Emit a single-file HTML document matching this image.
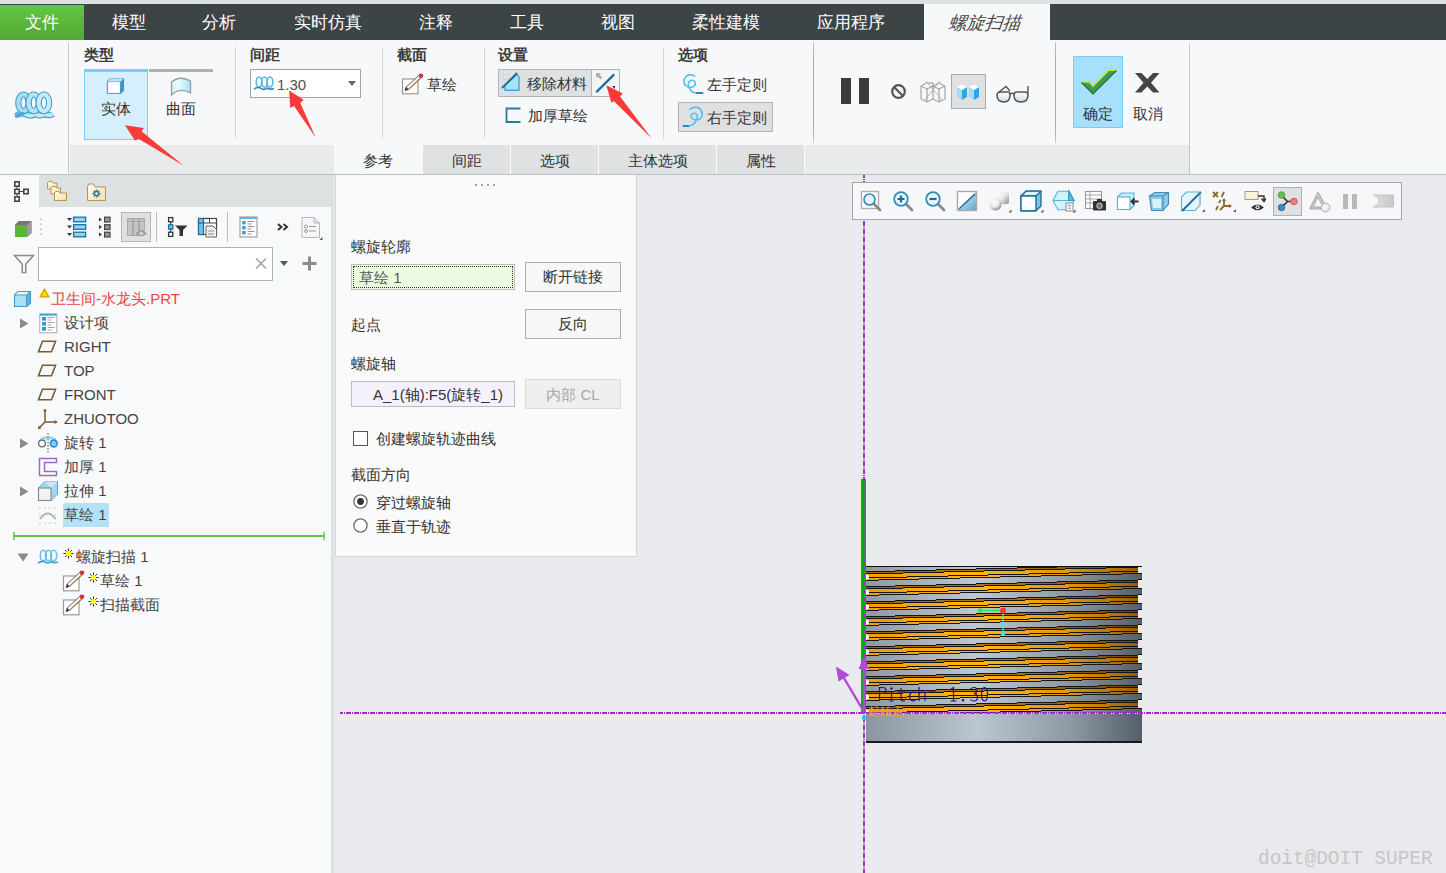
<!DOCTYPE html>
<html><head><meta charset="utf-8">
<style>
*{box-sizing:border-box;margin:0;padding:0}
html,body{width:1446px;height:873px;overflow:hidden;background:#e9eaee;font-family:"Liberation Sans",sans-serif;color:#333}
.a{position:absolute}
.t{position:absolute;white-space:nowrap;line-height:1}
#topstrip{left:0;top:0;width:1446px;height:4px;background:#dde1e1}
#menubar{left:0;top:4px;width:1446px;height:36px;background:#3d4446}
.mt{position:absolute;top:4px;height:36px;line-height:38px;font-size:17px;color:#fff;white-space:nowrap}
#ribbon{left:0;top:40px;width:1446px;height:134px;background:#f7f8fa}
.sep{position:absolute;width:1px;background:linear-gradient(#c4caca,#a4acac 15%,#a4acac 85%,#c4caca)}
.lbl{position:absolute;font-size:15px;font-weight:bold;color:#3c3c3c;white-space:nowrap;line-height:1}
.rt{position:absolute;font-size:15px;color:#333;white-space:nowrap;line-height:1}
#subbar{left:70px;top:145px;width:1119px;height:29px;background:#e8eaeb}
.st{position:absolute;top:145px;height:29px;background:#dfe1e3;font-size:15px;color:#333;text-align:center;line-height:31px}
#ribline{left:0;top:174px;width:1446px;height:1px;background:#b6c2c2}
#treehdr{left:0;top:175px;width:331px;height:32px;background:#dce1e1}
#tree{left:0;top:207px;width:331px;height:666px;background:#f8f9fa}
#sash{left:331px;top:175px;width:3px;height:698px;background:#dce1e1}
.tr{position:absolute;font-size:15px;color:#444;white-space:nowrap;line-height:1}
#panel{left:335px;top:175px;width:302px;height:382px;background:#fafafa;border:1px solid #d3d5d8;border-top:none}
.pl{position:absolute;font-size:15px;color:#333;white-space:nowrap;line-height:1}
.btn{position:absolute;background:#f7f7f7;border:1px solid #adadad;font-size:15px;color:#333;text-align:center}
.c{display:inline-block;width:1em;text-align:center}
</style></head><body>
<div class="a" id="topstrip"></div>
<div class="a" id="menubar"></div>
<div class="a" style="left:0;top:5px;width:84px;height:35px;background:linear-gradient(#63c843,#52a732)"></div>
<div class="mt" style="left:25px"><span class="c">文</span><span class="c">件</span></div>
<div class="mt" style="left:112px"><span class="c">模</span><span class="c">型</span></div>
<div class="mt" style="left:202px"><span class="c">分</span><span class="c">析</span></div>
<div class="mt" style="left:294px"><span class="c">实</span><span class="c">时</span><span class="c">仿</span><span class="c">真</span></div>
<div class="mt" style="left:419px"><span class="c">注</span><span class="c">释</span></div>
<div class="mt" style="left:510px"><span class="c">工</span><span class="c">具</span></div>
<div class="mt" style="left:601px"><span class="c">视</span><span class="c">图</span></div>
<div class="mt" style="left:692px"><span class="c">柔</span><span class="c">性</span><span class="c">建</span><span class="c">模</span></div>
<div class="mt" style="left:817px"><span class="c">应</span><span class="c">用</span><span class="c">程</span><span class="c">序</span></div>
<div class="a" style="left:924px;top:4px;width:126px;height:36px;background:#f7f8fa"></div>
<div class="mt" style="left:947px;color:#444;font-size:18px;transform:skewX(-20deg);transform-origin:0 28px"><span class="c">螺</span><span class="c">旋</span><span class="c">扫</span><span class="c">描</span></div>

<div class="a" id="ribbon"></div>
<div class="a" id="subbar"></div>
<div class="sep" style="left:68px;top:43px;height:130px;background:#c4c8c8"></div>
<div class="sep" style="left:235px;top:47px;height:92px;background:#d2d6d7"></div>
<div class="sep" style="left:382px;top:47px;height:92px;background:#d2d6d7"></div>
<div class="sep" style="left:484px;top:47px;height:92px;background:#d2d6d7"></div>
<div class="sep" style="left:663px;top:47px;height:92px;background:#d2d6d7"></div>
<div class="sep" style="left:813px;top:42px;height:101px"></div>
<div class="sep" style="left:1055px;top:42px;height:101px"></div>
<div class="sep" style="left:1189px;top:43px;height:131px;background:#c4c8c8"></div>

<div class="lbl" style="left:84px;top:47px"><span class="c">类</span><span class="c">型</span></div>
<div class="lbl" style="left:250px;top:47px"><span class="c">间</span><span class="c">距</span></div>
<div class="lbl" style="left:397px;top:47px"><span class="c">截</span><span class="c">面</span></div>
<div class="lbl" style="left:498px;top:47px"><span class="c">设</span><span class="c">置</span></div>
<div class="lbl" style="left:678px;top:47px"><span class="c">选</span><span class="c">项</span></div>

<!-- type buttons -->
<div class="a" style="left:84px;top:69px;width:64px;height:71px;background:#d5f0fc;border:1px solid #7fcdf3;border-top:3px solid #7fcdf3"></div>
<div class="a" style="left:149px;top:69px;width:64px;height:3px;background:#b0b0b0"></div>
<div class="rt" style="left:101px;top:101px"><span class="c">实</span><span class="c">体</span></div>
<div class="rt" style="left:166px;top:101px"><span class="c">曲</span><span class="c">面</span></div>

<!-- pitch input -->
<div class="a" style="left:250px;top:69px;width:111px;height:29px;background:#fff;border:1px solid #a4a4a4"></div>
<div class="t" style="left:277px;top:77px;font-size:15px;color:#505050">1.30</div>
<div class="a" style="left:348px;top:81px;width:0;height:0;border-left:4px solid transparent;border-right:4px solid transparent;border-top:5px solid #666"></div>

<div class="rt" style="left:427px;top:77px"><span class="c">草</span><span class="c">绘</span></div>

<!-- settings -->
<div class="a" style="left:498px;top:69px;width:94px;height:28px;background:#dfe0e2;border:1px solid #b4b4b4"></div>
<div class="a" style="left:591px;top:69px;width:29px;height:28px;background:#f3f4f6;border:1px solid #b4b4b4"></div>
<div class="rt" style="left:527px;top:76px"><span class="c">移</span><span class="c">除</span><span class="c">材</span><span class="c">料</span></div>
<div class="rt" style="left:528px;top:108px"><span class="c">加</span><span class="c">厚</span><span class="c">草</span><span class="c">绘</span></div>

<div class="rt" style="left:707px;top:77px"><span class="c">左</span><span class="c">手</span><span class="c">定</span><span class="c">则</span></div>
<div class="a" style="left:678px;top:102px;width:95px;height:30px;background:#dfe0e2;border:1px solid #b4b4b4"></div>
<div class="rt" style="left:707px;top:110px"><span class="c">右</span><span class="c">手</span><span class="c">定</span><span class="c">则</span></div>

<!-- ok/cancel -->
<div class="a" style="left:1073px;top:56px;width:50px;height:72px;background:#a6e0fc;border:1px solid #7ccaf4"></div>
<div class="rt" style="left:1083px;top:106px"><span class="c">确</span><span class="c">定</span></div>
<div class="rt" style="left:1133px;top:106px"><span class="c">取</span><span class="c">消</span></div>

<!-- subtabs -->
<div class="st" style="left:334px;width:88px;background:#f7f8fa"><span class="c">参</span><span class="c">考</span></div>
<div class="st" style="left:423px;width:87px"><span class="c">间</span><span class="c">距</span></div>
<div class="st" style="left:511px;width:87px"><span class="c">选</span><span class="c">项</span></div>
<div class="st" style="left:599px;width:117px"><span class="c">主</span><span class="c">体</span><span class="c">选</span><span class="c">项</span></div>
<div class="st" style="left:717px;width:87px"><span class="c">属</span><span class="c">性</span></div>

<div class="a" style="left:422px;top:145px;width:1px;height:29px;background:#fbfbfb"></div>
<div class="a" style="left:510px;top:145px;width:1px;height:29px;background:#fbfbfb"></div>
<div class="a" style="left:598px;top:145px;width:1px;height:29px;background:#fbfbfb"></div>
<div class="a" style="left:716px;top:145px;width:1px;height:29px;background:#fbfbfb"></div>
<div class="a" style="left:804px;top:145px;width:1px;height:29px;background:#fbfbfb"></div>
<div class="a" id="ribline"></div>

<!-- tree -->
<div class="a" id="treehdr"></div>
<div class="a" style="left:0;top:175px;width:39px;height:32px;background:#f8f9fa"></div>
<div class="a" id="tree"></div>
<div class="a" id="sash"></div>

<div class="a" style="left:38px;top:247px;width:235px;height:34px;background:#fff;border:1px solid #a9b3b3"></div>

<div class="tr" style="left:51px;top:291px;color:#e84545"><span class="c">卫</span><span class="c">生</span><span class="c">间</span>-<span class="c">水</span><span class="c">龙</span><span class="c">头</span>.PRT</div>
<div class="tr" style="left:64px;top:315px"><span class="c">设</span><span class="c">计</span><span class="c">项</span></div>
<div class="tr" style="left:64px;top:339px">RIGHT</div>
<div class="tr" style="left:64px;top:363px">TOP</div>
<div class="tr" style="left:64px;top:387px">FRONT</div>
<div class="tr" style="left:64px;top:411px">ZHUOTOO</div>
<div class="tr" style="left:64px;top:435px"><span class="c">旋</span><span class="c">转</span> 1</div>
<div class="tr" style="left:64px;top:459px"><span class="c">加</span><span class="c">厚</span> 1</div>
<div class="tr" style="left:64px;top:483px"><span class="c">拉</span><span class="c">伸</span> 1</div>
<div class="a" style="left:63px;top:503px;width:46px;height:24px;background:#b3e1f9"></div>
<div class="tr" style="left:64px;top:507px"><span class="c">草</span><span class="c">绘</span> 1</div>
<div class="a" style="left:14px;top:535px;width:310px;height:1.5px;background:#62c34a"></div>
<div class="tr" style="left:76px;top:549px"><span class="c">螺</span><span class="c">旋</span><span class="c">扫</span><span class="c">描</span> 1</div>
<div class="tr" style="left:100px;top:573px"><span class="c">草</span><span class="c">绘</span> 1</div>
<div class="tr" style="left:100px;top:597px"><span class="c">扫</span><span class="c">描</span><span class="c">截</span><span class="c">面</span></div>

<!-- tree header icons -->
<svg class="a" style="left:13px;top:180px" width="17" height="22" viewBox="0 0 17 22">
<g fill="none" stroke="#444" stroke-width="1.6">
<rect x="1.8" y="1.8" width="4.4" height="4.4"/><rect x="1.8" y="9.3" width="4.4" height="4.4"/><rect x="1.8" y="16.8" width="4.4" height="4.4"/><rect x="10.8" y="9.3" width="4.4" height="4.4"/>
<path d="M4 6.2 V9.3 M4 13.7 V16.8 M6.2 11.5 H10.8" stroke-width="1"/>
</g></svg>
<svg class="a" style="left:46px;top:180px" width="22" height="22" viewBox="0 0 22 22">
<defs><linearGradient id="fdg" x1="0" y1="0" x2="1" y2="1"><stop offset="0" stop-color="#fffdf5"/><stop offset="1" stop-color="#f6dca8"/></linearGradient></defs>
<g stroke="#b8964f" stroke-width="1" fill="url(#fdg)">
<path d="M1.5 3 L2.5 1.5 L6 1.5 L7 3 L11 3 L11 9 L1.5 9Z"/>
<path d="M5 8 L6 6.5 L9.5 6.5 L10.5 8 L14.5 8 L14.5 14 L5 14Z"/>
<path d="M8.5 13 L9.5 11.5 L13 11.5 L14 13 L20.5 13 L20.5 20.5 L8.5 20.5Z"/>
</g></svg>
<svg class="a" style="left:86px;top:182px" width="21" height="20" viewBox="0 0 21 20">
<path d="M1.5 5 L2.5 2 L7.5 2 L9 5 L19.5 5 L19.5 18.5 L1.5 18.5Z" fill="url(#fdg)" stroke="#b8964f" stroke-width="1"/>
<g stroke="#1f6d96" stroke-width="1.4"><path d="M10.5 7.5 V15.5 M6.5 11.5 H14.5 M7.8 8.8 L13.2 14.2 M13.2 8.8 L7.8 14.2"/></g>
<circle cx="10.5" cy="11.5" r="1.8" fill="#fff" stroke="#1f6d96"/>
</svg>
<!-- tree toolbar -->
<svg class="a" style="left:14px;top:220px" width="19" height="18" viewBox="0 0 19 18">
<path d="M1 5 L5 1 L17.5 1 L17.5 13 L13 17 L1 17Z" fill="#8a8a8a"/>
<path d="M1 5 L5 1 L17.5 1 L13 5Z" fill="#777"/>
<path d="M13 5 L17.5 1 L17.5 13 L13 17Z" fill="#9c9c9c"/>
<rect x="1" y="6" width="11.5" height="11" fill="#5ab734"/>
</svg>
<svg class="a" style="left:39px;top:217px" width="5" height="21" viewBox="0 0 5 21"><g fill="#c8c8c8"><rect x="1" y="1.5" width="2" height="1.5"/><rect x="1" y="6.5" width="2" height="1.5"/><rect x="1" y="11.5" width="2" height="1.5"/><rect x="1" y="16.5" width="2" height="1.5"/></g></svg>
<svg class="a" style="left:66px;top:216px" width="21" height="22" viewBox="0 0 21 22">
<g fill="#333"><path d="M1 2 L6 2 L3.5 5Z"/><path d="M1 9.5 L6 9.5 L3.5 12.5Z"/><path d="M1 17 L6 17 L3.5 20Z"/></g>
<g fill="#8ed8f4" stroke="#1c6e9a" stroke-width="1.3"><rect x="7.6" y="1.2" width="12" height="4.6"/><rect x="7.6" y="8.7" width="12" height="4.6"/><rect x="7.6" y="16.2" width="12" height="4.6"/></g>
</svg>
<svg class="a" style="left:98px;top:216px" width="14" height="22" viewBox="0 0 14 22">
<g fill="#333"><path d="M1 1.5 L4 3.5 L1 5.5Z"/><path d="M1 9 L4 11 L1 13Z"/><path d="M1 16.5 L4 18.5 L1 20.5Z"/></g>
<g fill="#999" stroke="#444" stroke-width="1.2"><rect x="6.6" y="1.2" width="5.4" height="4.8"/><rect x="6.6" y="8.7" width="5.4" height="4.8"/><rect x="6.6" y="16.2" width="5.4" height="4.8"/></g>
</svg>
<div class="a" style="left:121px;top:212px;width:30px;height:30px;background:#dfe0e2;border:1px solid #b5b5b5"></div>
<svg class="a" style="left:126px;top:217px" width="22" height="22" viewBox="0 0 22 22">
<g fill="#c4c4c4" stroke="#a8a8a8" stroke-width="1"><rect x="1.5" y="1.5" width="5" height="17"/><rect x="7.5" y="1.5" width="5" height="17"/><rect x="13.5" y="1.5" width="5" height="12"/></g>
<path d="M1.5 4.5 H18.5" stroke="#a8a8a8"/>
<path d="M10 16.5 Q15 12 20.5 16.5 Q15 21 10 16.5Z" fill="#aaa" stroke="#999"/>
<circle cx="15.2" cy="16.5" r="1.6" fill="#ddd"/>
</svg>
<div class="a" style="left:156px;top:212px;width:1px;height:30px;background:#b8bcbc"></div>
<svg class="a" style="left:167px;top:216px" width="22" height="22" viewBox="0 0 22 22">
<g fill="#fff" stroke="#333" stroke-width="1.3"><rect x="1.6" y="1.6" width="4.2" height="4.2"/><rect x="1.6" y="16.2" width="4.2" height="4.2"/></g>
<rect x="1.6" y="8.9" width="4.2" height="4.2" fill="#6cc4ec" stroke="#1c6e9a" stroke-width="1.3"/>
<path d="M3.7 5.8 V8.9 M3.7 13.1 V16.2" stroke="#333"/>
<path d="M8 9.5 H20.5 L16 14 V20 H12.5 V14 Z" fill="#333"/>
</svg>
<svg class="a" style="left:197px;top:217px" width="22" height="21" viewBox="0 0 22 21">
<rect x="1.5" y="1.5" width="18" height="16" fill="#fff" stroke="#444" stroke-width="1.2"/>
<rect x="1.5" y="1.5" width="5" height="16" fill="#6cc4ec" stroke="#1c6e9a" stroke-width="1.2"/>
<path d="M1.5 6 H19.5 M12.5 1.5 V6" stroke="#444"/>
<path d="M9 9 L16 9 L19.5 12.5 L19.5 20 L9 20Z" fill="#f2f2f2" stroke="#666"/>
<path d="M11 14 H17 M11 17 H17" stroke="#888"/>
</svg>
<div class="a" style="left:227px;top:212px;width:1px;height:30px;background:#b8bcbc"></div>
<svg class="a" style="left:239px;top:216px" width="19" height="22" viewBox="0 0 19 22">
<rect x="1" y="1" width="17" height="20" fill="#fff" stroke="#999" stroke-width="1.1"/>
<rect x="1" y="1" width="17" height="2" fill="#5ab8e6"/>
<g fill="#3a9ed4"><rect x="3.2" y="5" width="3.4" height="3.4"/><rect x="3.2" y="10" width="3.4" height="3.4"/><rect x="3.2" y="15" width="3.4" height="3.4"/></g>
<path d="M8.5 5.5 H15.5 M8.5 8 H12.5 M8.5 10.5 H15.5 M8.5 13 H12.5 M8.5 15.5 H15.5 M8.5 18 H12.5" stroke="#888" stroke-width="0.9"/>
</svg>
<svg class="a" style="left:277px;top:223px" width="12" height="8" viewBox="0 0 12 8">
<path d="M1 1 L4.5 4 L1 7 M6.5 1 L10 4 L6.5 7" fill="none" stroke="#333" stroke-width="2"/>
</svg>
<svg class="a" style="left:300px;top:216px" width="24" height="25" viewBox="0 0 24 25">
<path d="M2 1.5 L14 1.5 L19.5 7 L19.5 21.5 L2 21.5Z" fill="#f4f6f8" stroke="#b8b8b8" stroke-width="1"/>
<path d="M14 1.5 L14 7 L19.5 7" fill="#dde" stroke="#b8b8b8"/>
<circle cx="6" cy="10.5" r="1.5" fill="none" stroke="#999"/><circle cx="6" cy="15" r="1.5" fill="none" stroke="#999"/>
<path d="M9 10.5 H16 M9 15 H16" stroke="#999" stroke-width="1.2"/>
<path d="M22.5 21 L22.5 24 L19.5 24Z" fill="#555"/>
</svg>
<!-- search row -->
<svg class="a" style="left:13px;top:254px" width="22" height="20" viewBox="0 0 22 20">
<path d="M1.5 1.5 H20.5 L12.8 10 V18.5 H9.2 V10 Z" fill="none" stroke="#8a8a8a" stroke-width="1.5"/>
</svg>
<svg class="a" style="left:255px;top:258px" width="12" height="11" viewBox="0 0 12 11"><path d="M1 0.5 L11 10.5 M11 0.5 L1 10.5" stroke="#9a9a9a" stroke-width="1.3"/></svg>
<div class="a" style="left:280px;top:261px;width:0;height:0;border-left:4px solid transparent;border-right:4px solid transparent;border-top:5px solid #555"></div>
<svg class="a" style="left:302px;top:256px" width="15" height="15" viewBox="0 0 15 15"><path d="M7.5 0.5 V14.5 M0.5 7.5 H14.5" stroke="#8a8a8a" stroke-width="3"/></svg>
<!-- root cube -->
<svg class="a" style="left:13px;top:290px" width="19" height="18" viewBox="0 0 19 18">
<path d="M1.5 5 L5 1.5 L17.5 1.5 L17.5 13 L13.5 16.5 L1.5 16.5Z" fill="#a8e0f8" stroke="#4a9ac8" stroke-width="1.1"/>
<path d="M1.5 5 L5 1.5 L17.5 1.5 L13.5 5Z" fill="#e8f8ff" stroke="#4a9ac8" stroke-width="1"/>
<path d="M13.5 5 L17.5 1.5 L17.5 13 L13.5 16.5Z" fill="#58b4e4" stroke="#4a9ac8" stroke-width="1"/>
</svg>
<svg class="a" style="left:39px;top:288px" width="11" height="10" viewBox="0 0 11 10"><path d="M5.5 1 L10 9 L1 9Z" fill="#f6d600" stroke="#d49c00" stroke-width="1.2" stroke-linejoin="round"/></svg>
<!-- expand arrows -->
<svg class="a" style="left:19px;top:318px" width="10" height="11" viewBox="0 0 10 11"><path d="M1 0.5 L9.5 5.5 L1 10.5Z" fill="#8a8a8a"/></svg>
<svg class="a" style="left:19px;top:438px" width="10" height="11" viewBox="0 0 10 11"><path d="M1 0.5 L9.5 5.5 L1 10.5Z" fill="#8a8a8a"/></svg>
<svg class="a" style="left:19px;top:486px" width="10" height="11" viewBox="0 0 10 11"><path d="M1 0.5 L9.5 5.5 L1 10.5Z" fill="#8a8a8a"/></svg>
<svg class="a" style="left:17px;top:553px" width="12" height="9" viewBox="0 0 12 9"><path d="M0.5 0.5 L11.5 0.5 L6 8.5Z" fill="#8a8a8a"/></svg>
<!-- design items list icon -->
<svg class="a" style="left:39px;top:313px" width="19" height="21" viewBox="0 0 19 21">
<rect x="0.8" y="0.8" width="17" height="19" fill="#fff" stroke="#aaa" stroke-width="1"/>
<rect x="1" y="1" width="16.6" height="1.6" fill="#3aa0d8"/>
<g fill="#2e96d0"><rect x="3" y="4" width="4" height="3.6"/><rect x="3" y="9" width="4" height="3.6"/><rect x="3" y="14" width="4" height="3.6"/></g>
<path d="M8.5 4.5 H15.5 M8.5 7 H12.5 M8.5 9.5 H15.5 M8.5 12 H12.5 M8.5 14.5 H15.5 M8.5 17 H12.5" stroke="#999" stroke-width="0.9"/>
</svg>
<!-- planes -->
<svg class="a" style="left:37px;top:340px" width="20" height="13" viewBox="0 0 20 13"><path d="M5.5 1.2 H18.5 L14.5 11.8 H1.5Z" fill="none" stroke="#7a5c30" stroke-width="1.6"/></svg>
<svg class="a" style="left:37px;top:364px" width="20" height="13" viewBox="0 0 20 13"><path d="M5.5 1.2 H18.5 L14.5 11.8 H1.5Z" fill="none" stroke="#7a5c30" stroke-width="1.6"/></svg>
<svg class="a" style="left:37px;top:388px" width="20" height="13" viewBox="0 0 20 13"><path d="M5.5 1.2 H18.5 L14.5 11.8 H1.5Z" fill="none" stroke="#7a5c30" stroke-width="1.6"/></svg>
<!-- csys -->
<svg class="a" style="left:37px;top:409px" width="22" height="21" viewBox="0 0 22 21">
<path d="M8 1 V13 H20 M8 13 L1.5 19.5" fill="none" stroke="#7a5c30" stroke-width="1.5"/>
<circle cx="8" cy="1.6" r="1.4" fill="#7a5c30"/><path d="M20.5 13 L17.5 11 V15Z" fill="#7a5c30"/><path d="M1 20 L1.5 16.5 L4.5 19.5Z" fill="#7a5c30"/>
</svg>
<!-- revolve -->
<svg class="a" style="left:37px;top:432px" width="22" height="22" viewBox="0 0 22 22">
<path d="M3 8 Q11 3 19 8" fill="none" stroke="#9ad4ee" stroke-width="3"/>
<circle cx="5" cy="11.5" r="3.4" fill="#fff" stroke="#666" stroke-width="1.3"/>
<circle cx="16.8" cy="11.5" r="3.4" fill="#7ccdf0" stroke="#2a8cc4" stroke-width="1.6"/>
<path d="M11 1 V21" stroke="#555" stroke-width="1" stroke-dasharray="1.5 1.5"/>
</svg>
<!-- thicken -->
<svg class="a" style="left:38px;top:457px" width="20" height="20" viewBox="0 0 20 20">
<path d="M1.5 1.5 H18.5 V5.5 H6.5 V14.5 H18.5 V18.5 H1.5Z" fill="#fff" stroke="#9a6cc0" stroke-width="1.5"/>
</svg>
<!-- extrude -->
<svg class="a" style="left:37px;top:480px" width="22" height="22" viewBox="0 0 22 22">
<path d="M1.5 8 L8 1.5 L20.5 1.5 L20.5 14 L14 20.5 L1.5 20.5Z" fill="#9fd6f0" stroke="#5aa4cc" stroke-width="1"/>
<path d="M8 1.5 L20.5 1.5 L14 8" fill="#c6ecfb"/>
<rect x="1.5" y="8" width="12.5" height="12.5" fill="#f2f2f2" stroke="#888" stroke-width="1.1"/>
</svg>
<!-- sketch gray -->
<svg class="a" style="left:38px;top:506px" width="20" height="19" viewBox="0 0 20 19">
<g fill="#d0d0d0"><rect x="1" y="1" width="1.5" height="1.5"/><rect x="6" y="1" width="1.5" height="1.5"/><rect x="11" y="1" width="1.5" height="1.5"/><rect x="16" y="1" width="1.5" height="1.5"/>
<rect x="1" y="8" width="1.5" height="1.5"/><rect x="16.5" y="8" width="1.5" height="1.5"/><rect x="1" y="16.5" width="1.5" height="1.5"/><rect x="6" y="16.5" width="1.5" height="1.5"/><rect x="11" y="16.5" width="1.5" height="1.5"/><rect x="16.5" y="16.5" width="1.5" height="1.5"/></g>
<path d="M2 13 Q9.5 2 17.5 13" fill="none" stroke="#b8b4aa" stroke-width="2"/>
</svg>
<!-- green end marker -->
<svg class="a" style="left:12px;top:531px" width="314" height="10" viewBox="0 0 314 10"><path d="M2 1 V9 M312 1 V9" stroke="#62c34a" stroke-width="1.5"/></svg>
<!-- helix small in tree -->
<svg class="a" style="left:37px;top:549px" width="22" height="16" viewBox="0 0 22 16">
<g fill="none" stroke="#6ec0e4" stroke-width="1.6">
<ellipse cx="6.3" cy="6.5" rx="3" ry="5.3"/><ellipse cx="11.5" cy="6.5" rx="3" ry="5.3"/><ellipse cx="16.7" cy="6.5" rx="3" ry="5.3"/>
<path d="M1 14 Q6 11 9 13.5 Q12 14.5 14 12.5 Q17 14.5 21 13" stroke="#3a9fd2"/>
</g></svg>
<!-- stars -->
<svg class="a" style="left:63px;top:548px" width="11" height="11" viewBox="0 0 11 11">
<path d="M5.5 0.5 V10.5 M0.5 5.5 H10.5 M2 2 L9 9 M9 2 L2 9" stroke="#223" stroke-width="1"/><circle cx="5.5" cy="5.5" r="2.8" fill="#ffff00"/></svg>
<svg class="a" style="left:88px;top:572px" width="11" height="11" viewBox="0 0 11 11">
<path d="M5.5 0.5 V10.5 M0.5 5.5 H10.5 M2 2 L9 9 M9 2 L2 9" stroke="#223" stroke-width="1"/><circle cx="5.5" cy="5.5" r="2.8" fill="#ffff00"/></svg>
<svg class="a" style="left:88px;top:596px" width="11" height="11" viewBox="0 0 11 11">
<path d="M5.5 0.5 V10.5 M0.5 5.5 H10.5 M2 2 L9 9 M9 2 L2 9" stroke="#223" stroke-width="1"/><circle cx="5.5" cy="5.5" r="2.8" fill="#ffff00"/></svg>
<!-- child pencils -->
<svg class="a" style="left:62px;top:570px" width="23" height="22" viewBox="0 0 23 22">
<rect x="1.5" y="6" width="15.5" height="14.8" fill="#fff" stroke="#9a9a9a" stroke-width="1.2"/>
<path d="M4 17.5 L5.2 13.8 L18.5 1.8 L20.8 4.1 L7.5 16.4 Z" fill="#f4f4f4" stroke="#555" stroke-width="0.9"/>
<path d="M7.5 16.4 L20.8 4.1" stroke="#b07a40" stroke-width="1.2"/><circle cx="20" cy="2.8" r="2.3" fill="#c83a3a"/><path d="M4 17.5 L5.2 13.8 L7.5 16.4Z" fill="#333"/>
</svg>
<svg class="a" style="left:62px;top:594px" width="23" height="22" viewBox="0 0 23 22">
<rect x="1.5" y="6" width="15.5" height="14.8" fill="#fff" stroke="#9a9a9a" stroke-width="1.2"/>
<path d="M4 17.5 L5.2 13.8 L18.5 1.8 L20.8 4.1 L7.5 16.4 Z" fill="#f4f4f4" stroke="#555" stroke-width="0.9"/>
<path d="M7.5 16.4 L20.8 4.1" stroke="#b07a40" stroke-width="1.2"/><circle cx="20" cy="2.8" r="2.3" fill="#c83a3a"/><path d="M4 17.5 L5.2 13.8 L7.5 16.4Z" fill="#333"/>
</svg>

<!-- panel -->
<div class="a" id="panel"></div>
<div class="pl" style="left:351px;top:239px"><span class="c">螺</span><span class="c">旋</span><span class="c">轮</span><span class="c">廓</span></div>
<div class="a" style="left:351px;top:264px;width:164px;height:26px;background:#eafbe0;border:1px solid #bdbdbd"></div><div class="a" style="left:353px;top:266px;width:160px;height:22px;border:1px dotted #333"></div>
<div class="pl" style="left:359px;top:270px;color:#555"><span class="c">草</span><span class="c">绘</span> 1</div>
<div class="btn" style="left:525px;top:262px;width:96px;height:30px;line-height:28px"><span class="c">断</span><span class="c">开</span><span class="c">链</span><span class="c">接</span></div>
<div class="pl" style="left:351px;top:317px"><span class="c">起</span><span class="c">点</span></div>
<div class="btn" style="left:525px;top:309px;width:96px;height:30px;line-height:28px"><span class="c">反</span><span class="c">向</span></div>
<div class="pl" style="left:351px;top:356px"><span class="c">螺</span><span class="c">旋</span><span class="c">轴</span></div>
<div class="a" style="left:351px;top:381px;width:164px;height:26px;background:#f4f1fd;border:1px solid #b9bbc8"></div>
<div class="pl" style="left:373px;top:387px">A_1(<span class="c">轴</span>):F5(<span class="c">旋</span><span class="c">转</span>_1)</div>
<div class="btn" style="left:525px;top:379px;width:96px;height:30px;line-height:30px;background:#eeeff1;border-color:#dadbdd;color:#a8a8a8"><span class="c">内</span><span class="c">部</span> CL</div>
<div class="a" style="left:353px;top:431px;width:15px;height:15px;background:#fff;border:1px solid #555"></div>
<div class="pl" style="left:376px;top:431px"><span class="c">创</span><span class="c">建</span><span class="c">螺</span><span class="c">旋</span><span class="c">轨</span><span class="c">迹</span><span class="c">曲</span><span class="c">线</span></div>
<div class="pl" style="left:351px;top:467px"><span class="c">截</span><span class="c">面</span><span class="c">方</span><span class="c">向</span></div>
<div class="pl" style="left:376px;top:495px"><span class="c">穿</span><span class="c">过</span><span class="c">螺</span><span class="c">旋</span><span class="c">轴</span></div>
<div class="pl" style="left:376px;top:519px"><span class="c">垂</span><span class="c">直</span><span class="c">于</span><span class="c">轨</span><span class="c">迹</span></div>


<!-- big helix -->
<svg class="a" style="left:13px;top:90px" width="42" height="30" viewBox="13 90 42 30">
<g fill="none">
<path d="M16.5 116 Q20 112 26 114.5 Q31 117 35 114 Q40 117 45 114 Q50 116.5 53 114" stroke="#3a9cd0" stroke-width="6"/>
<path d="M16.5 116 Q20 112 26 114.5 Q31 117 35 114 Q40 117 45 114 Q50 116.5 53 114" stroke="#bfe9f9" stroke-width="4"/>
<ellipse cx="23.5" cy="102.8" rx="5.2" ry="8.3" stroke="#3a9cd0" stroke-width="6.2"/>
<ellipse cx="23.5" cy="102.8" rx="5.2" ry="8.3" stroke="#a9dcf0" stroke-width="4.2"/>
<ellipse cx="33.7" cy="102.8" rx="5.2" ry="8.3" stroke="#3a9cd0" stroke-width="6.2"/>
<ellipse cx="33.7" cy="102.8" rx="5.2" ry="8.3" stroke="#b6e4f6" stroke-width="4.2"/>
<ellipse cx="43.9" cy="102.8" rx="5.2" ry="8.3" stroke="#3a9cd0" stroke-width="6.2"/>
<ellipse cx="43.9" cy="102.8" rx="5.2" ry="8.3" stroke="#c4ecfb" stroke-width="4.2"/>
<path d="M16.5 116 Q19 113.5 23 113.8" stroke="#4aa6d6" stroke-width="3.6" stroke-linecap="round"/>
</g></svg>
<!-- solid cube -->
<svg class="a" style="left:106px;top:77px" width="19" height="18" viewBox="0 0 19 18">
<path d="M1.5 4.5 L4.5 1.5 L17.5 1.5 L17.5 13.5 L14.5 16.5 L1.5 16.5 Z" fill="#7cc6e8" stroke="#4a9dc6" stroke-width="1.2"/>
<rect x="1.5" y="4.5" width="13" height="12" fill="#fff" stroke="#5aaad0" stroke-width="1.2"/>
<path d="M14.5 4.5 L17.5 1.5 L17.5 13.5 L14.5 16.5Z" fill="#3f92bf"/>
<path d="M1.5 4.5 L4.5 1.5 L17.5 1.5 L14.5 4.5Z" fill="#b8e6f8"/>
</svg>
<!-- surface -->
<svg class="a" style="left:170px;top:76px" width="22" height="21" viewBox="0 0 22 21">
<defs><linearGradient id="sfg" x1="0" x2="1"><stop offset="0" stop-color="#c8f0fc"/><stop offset="0.35" stop-color="#eefbff"/><stop offset="1" stop-color="#a6e4f8"/></linearGradient></defs>
<path d="M1.5 6 Q10 -1 20.5 5 L20.5 17 Q10 11 1.5 19 Z" fill="url(#sfg)" stroke="#9a9a9a" stroke-width="1.3"/>
</svg>
<!-- pitch small helix -->
<svg class="a" style="left:253px;top:76px" width="22" height="15" viewBox="0 0 22 15">
<g fill="none" stroke="#5ab4dc" stroke-width="1.6">
<ellipse cx="6" cy="6" rx="2.8" ry="5"/><ellipse cx="11.5" cy="6" rx="2.8" ry="5"/><ellipse cx="17" cy="6" rx="2.8" ry="5"/>
<path d="M1 13 Q6 10 9 13 Q12 14 14 12 Q17 14 21 12.5" stroke="#2a8cc4"/>
</g></svg>
<!-- sketch pencil -->
<svg class="a" style="left:401px;top:73px" width="23" height="22" viewBox="0 0 23 22">
<rect x="1.5" y="6" width="15.5" height="14.8" fill="#fff" stroke="#9a9a9a" stroke-width="1.2"/>
<path d="M4 17.5 L5.2 13.8 L18.5 1.8 L20.8 4.1 L7.5 16.4 Z" fill="#f4f4f4" stroke="#555" stroke-width="0.9"/>
<path d="M7.5 16.4 L20.8 4.1" stroke="#b07a40" stroke-width="1.2"/>
<circle cx="20" cy="2.8" r="2.3" fill="#c83a3a"/>
<path d="M4 17.5 L5.2 13.8 L7.5 16.4Z" fill="#333"/>
</svg>
<!-- remove material icon -->
<svg class="a" style="left:500px;top:70px" width="22" height="24" viewBox="500 70 22 24">
<rect x="503.5" y="74.5" width="5" height="5" fill="none" stroke="#c4c4c4" stroke-width="0.8" stroke-dasharray="1 1"/>
<path d="M505 90.3 L519 90.3 L519 76.5 L516.8 74.5 L505 85.5 Z" fill="#a8e4f8" stroke="#4aa6d4" stroke-width="1.5" stroke-linejoin="round"/>
<path d="M502.5 87.5 L516.5 73.5" stroke="#1e6a94" stroke-width="1.9" stroke-linecap="round"/>
</svg>
<!-- flip icon -->
<svg class="a" style="left:592px;top:70px" width="27" height="26" viewBox="0 0 27 26">
<path d="M4 3 L9 3 L7.5 4.5 L10.5 7.5 L8.5 9.5 L5.5 6.5 L4 8 Z" fill="#b0b0b0"/>
<path d="M5 21.5 L21.5 5" stroke="#1a6a94" stroke-width="2.4" stroke-linecap="round"/>
<path d="M20 16 L23 16 L23 19 Z" fill="#333"/>
</svg>
<!-- thicken icon -->
<svg class="a" style="left:505px;top:107px" width="17" height="17" viewBox="0 0 17 17">
<path d="M15.5 1.5 L1.5 1.5 L1.5 15 L15.5 15" fill="none" stroke="#2a7aa4" stroke-width="1.8"/>
</svg>
<!-- left hand helix -->
<svg class="a" style="left:682px;top:73px" width="23" height="22" viewBox="0 0 23 22">
<path d="M12.5 3.2 Q8 0 4 3.5 Q0 8 3.5 12.5 Q6.5 15 10.5 14 Q14 12.5 13 9 Q11.5 6.5 8.5 7.5 Q5.5 9 6.5 13 Q8.5 19.5 14 20 L21 20" fill="none" stroke="#52c0ec" stroke-width="1.6" stroke-linecap="round"/>
<path d="M14 20 L21 20" stroke="#1a84b8" stroke-width="1.8"/>
</svg>
<!-- right hand helix -->
<svg class="a" style="left:682px;top:106px" width="23" height="22" viewBox="0 0 23 22">
<path d="M8 3 Q12 0 17 2 Q21 5 20 10 Q18.5 14 14 14 Q9.5 13.5 9 10 Q9 7 12.5 7.3 Q16 8 15 12 Q13 19.5 7 20 L1 20" fill="none" stroke="#52c0ec" stroke-width="1.6" stroke-linecap="round"/>
<path d="M7 20 L1 20" stroke="#1a84b8" stroke-width="1.8"/>
</svg>
<!-- pause -->
<div class="a" style="left:841px;top:78px;width:10px;height:26px;background:#3b3b3b"></div>
<div class="a" style="left:859px;top:78px;width:10px;height:26px;background:#3b3b3b"></div>
<!-- no symbol -->
<svg class="a" style="left:890px;top:83px" width="17" height="17" viewBox="0 0 17 17">
<circle cx="8.5" cy="8.5" r="6.3" fill="none" stroke="#555" stroke-width="2.2"/>
<path d="M4.3 4.3 L12.7 12.7" stroke="#555" stroke-width="2.2"/>
</svg>
<!-- wireframe cubes -->
<svg class="a" style="left:920px;top:80px" width="27" height="23" viewBox="0 0 27 23">
<g fill="none" stroke="#8a8a8a" stroke-width="0.9">
<path d="M1 6 L6 3 L13 3 L13 19 L7 22 L1 19 Z M1 6 L7 9 L13 6 M7 9 L7 22"/>
<path d="M13 6 L19 3 L25 6 L25 19 L19 22 L13 19 M19 9 L19 22 M13 6 L19 9 L25 6"/>
<path d="M6 1 L22 20 M20 1 L4 21" stroke="#aaa"/>
</g></svg>
<!-- selected display button -->
<div class="a" style="left:951px;top:74px;width:35px;height:35px;background:#dfe0e2;border:1px solid #aaa"></div>
<svg class="a" style="left:956px;top:84px" width="26" height="17" viewBox="0 0 26 17">
<path d="M1 3 L6 6 L6 16 L1 13 Z" fill="#9fdcf6"/><path d="M6 6 L11 3 L11 13 L6 16Z" fill="#2fa6e2"/><path d="M1 3 L6 0.5 L11 3 L6 6Z" fill="#fff"/>
<path d="M13 3 L18 6 L18 16 L13 13 Z" fill="#9fdcf6"/><path d="M18 6 L23 3 L23 13 L18 16Z" fill="#2fa6e2"/><path d="M13 3 L18 0.5 L23 3 L18 6Z" fill="#fff"/>
</svg>
<!-- glasses -->
<svg class="a" style="left:995px;top:85px" width="36" height="20" viewBox="0 0 36 20">
<defs><linearGradient id="glg" x1="0" y1="0" x2="0" y2="1"><stop offset="0" stop-color="#fff"/><stop offset="1" stop-color="#c8dde6"/></linearGradient></defs>
<g stroke="#555" stroke-width="1.6" fill="url(#glg)">
<path d="M2 10 Q2 7 6 7 L13 7 Q15 7 15 10 Q15 17 9 17 Q2 17 2 10Z"/>
<path d="M19 10 Q19 7 22 7 L30 7 Q33 7 33 10 Q33 17 26 17 Q19 17 19 10Z"/>
</g>
<path d="M15 9 Q17 7.5 19 9 M4 7 L11 1.5 L15 6 M33 8 L33 1" fill="none" stroke="#555" stroke-width="1.4"/>
</svg>
<!-- check -->
<svg class="a" style="left:1079px;top:68px" width="40" height="28" viewBox="0 0 40 28">
<path d="M2 14 L10 14 L14 18 L30 2 L37.5 2.5 L14 26 Z" fill="#3b9a5c"/>
<path d="M2 14 L10 14 L14 18 L30 2 L37.5 2.5" fill="none" stroke="#c6e62a" stroke-width="1.6"/>
<path d="M2.5 14.5 L14 26 L37.5 2.5" fill="none" stroke="#2a6e2a" stroke-width="1.2"/>
</svg>
<!-- X -->
<svg class="a" style="left:1135px;top:73px" width="25" height="20" viewBox="0 0 25 20">
<polygon points="0,0 6.5,0 12.25,6 18,0 24.5,0 16,9.75 24.5,19.5 18,19.5 12.25,13.5 6.5,19.5 0,19.5 8.5,9.75" fill="#464646"/>
</svg>
<!-- red arrows -->
<svg class="a" style="left:0;top:0" width="700" height="180" viewBox="0 0 700 180">
<g fill="#fb3a3a">
<polygon points="125,125.2 143.9,128.1 141.5,131.2 183.4,165.5 138.4,138.7 134.9,140.4"/>
<polygon points="289.1,90.4 303.6,99.7 300.3,103.1 315.8,137.7 294,106 290.3,107.9"/>
<polygon points="606.3,85.3 622.8,93.4 620.1,96.6 651.9,138.8 614,101.2 611.3,102.6"/>
</g></svg>

<!-- graphics -->
<div class="a" style="left:861px;top:479px;width:5px;height:234px;background:#00b400"></div>
<svg class="a" style="left:866px;top:566px" width="278" height="180" viewBox="0 0 278 180" shape-rendering="crispEdges">
<defs>
<linearGradient id="gg" x1="0" x2="1"><stop offset="0" stop-color="#8e99a5"/><stop offset="0.4" stop-color="#bcc8d4"/><stop offset="0.72" stop-color="#8e99a4"/><stop offset="0.9" stop-color="#6c7680"/><stop offset="1" stop-color="#545e68"/></linearGradient>
<linearGradient id="go" x1="0" x2="1"><stop offset="0" stop-color="#ec9c10"/><stop offset="0.4" stop-color="#ffb616"/><stop offset="0.72" stop-color="#e4980e"/><stop offset="0.9" stop-color="#b47408"/><stop offset="1" stop-color="#8e5806"/></linearGradient>
<linearGradient id="gb" x1="0" x2="1"><stop offset="0" stop-color="#9a6408"/><stop offset="0.45" stop-color="#b87a0c"/><stop offset="1" stop-color="#6e4604"/></linearGradient>
<linearGradient id="gbase" x1="0" x2="1"><stop offset="0" stop-color="#8a95a1"/><stop offset="0.4" stop-color="#bac6d2"/><stop offset="0.75" stop-color="#8c97a2"/><stop offset="1" stop-color="#545e68"/></linearGradient>
<clipPath id="cth"><rect x="0" y="0" width="276" height="147"/></clipPath>
</defs>
<clipPath id="cth2"><rect x="0" y="0" width="272" height="147"/></clipPath>
<g clip-path="url(#cth2)">
<rect x="0" y="0" width="276" height="147" fill="url(#go)"/>
<polygon points="0,6 29,6 29,5 70,5 70,4 110,4 110,3 151,3 151,2 191,2 191,1 232,1 232,0 272,0 272,-1 276,-1 276,1 240,1 240,2 199,2 199,3 159,3 159,4 118,4 118,5 78,5 78,6 37,6 37,7 0,7" fill="url(#gb)"/>
<polygon points="0,21 29,21 29,20 70,20 70,19 110,19 110,18 151,18 151,17 191,17 191,16 232,16 232,15 272,15 272,14 276,14 276,16 240,16 240,17 199,17 199,18 159,18 159,19 118,19 118,20 78,20 78,21 37,21 37,22 0,22" fill="url(#gb)"/>
<polygon points="0,36 29,36 29,35 70,35 70,34 110,34 110,33 151,33 151,32 191,32 191,31 232,31 232,30 272,30 272,29 276,29 276,31 240,31 240,32 199,32 199,33 159,33 159,34 118,34 118,35 78,35 78,36 37,36 37,37 0,37" fill="url(#gb)"/>
<polygon points="0,51 29,51 29,50 70,50 70,49 110,49 110,48 151,48 151,47 191,47 191,46 232,46 232,45 272,45 272,44 276,44 276,46 240,46 240,47 199,47 199,48 159,48 159,49 118,49 118,50 78,50 78,51 37,51 37,52 0,52" fill="url(#gb)"/>
<polygon points="0,66 29,66 29,65 70,65 70,64 110,64 110,63 151,63 151,62 191,62 191,61 232,61 232,60 272,60 272,59 276,59 276,61 240,61 240,62 199,62 199,63 159,63 159,64 118,64 118,65 78,65 78,66 37,66 37,67 0,67" fill="url(#gb)"/>
<polygon points="0,81 29,81 29,80 70,80 70,79 110,79 110,78 151,78 151,77 191,77 191,76 232,76 232,75 272,75 272,74 276,74 276,76 240,76 240,77 199,77 199,78 159,78 159,79 118,79 118,80 78,80 78,81 37,81 37,82 0,82" fill="url(#gb)"/>
<polygon points="0,96 29,96 29,95 70,95 70,94 110,94 110,93 151,93 151,92 191,92 191,91 232,91 232,90 272,90 272,89 276,89 276,91 240,91 240,92 199,92 199,93 159,93 159,94 118,94 118,95 78,95 78,96 37,96 37,97 0,97" fill="url(#gb)"/>
<polygon points="0,111 29,111 29,110 70,110 70,109 110,109 110,108 151,108 151,107 191,107 191,106 232,106 232,105 272,105 272,104 276,104 276,106 240,106 240,107 199,107 199,108 159,108 159,109 118,109 118,110 78,110 78,111 37,111 37,112 0,112" fill="url(#gb)"/>
<polygon points="0,126 29,126 29,125 70,125 70,124 110,124 110,123 151,123 151,122 191,122 191,121 232,121 232,120 272,120 272,119 276,119 276,121 240,121 240,122 199,122 199,123 159,123 159,124 118,124 118,125 78,125 78,126 37,126 37,127 0,127" fill="url(#gb)"/>
<polygon points="0,141 29,141 29,140 70,140 70,139 110,139 110,138 151,138 151,137 191,137 191,136 232,136 232,135 272,135 272,134 276,134 276,136 240,136 240,137 199,137 199,138 159,138 159,139 118,139 118,140 78,140 78,141 37,141 37,142 0,142" fill="url(#gb)"/>
<path fill="#141414" d="M0 7h37v1h-37zM37 6h41v1h-41zM78 5h40v1h-40zM118 4h41v1h-41zM159 3h40v1h-40zM199 2h41v1h-41zM240 1h36v1h-36zM0 12h1v1h-1zM1 11h40v1h-40zM41 10h41v1h-41zM82 9h40v1h-40zM122 8h41v1h-41zM163 7h40v1h-40zM203 6h41v1h-41zM244 5h32v1h-32zM0 22h37v1h-37zM37 21h41v1h-41zM78 20h40v1h-40zM118 19h41v1h-41zM159 18h40v1h-40zM199 17h41v1h-41zM240 16h36v1h-36zM0 27h1v1h-1zM1 26h40v1h-40zM41 25h41v1h-41zM82 24h40v1h-40zM122 23h41v1h-41zM163 22h40v1h-40zM203 21h41v1h-41zM244 20h32v1h-32zM0 37h37v1h-37zM37 36h41v1h-41zM78 35h40v1h-40zM118 34h41v1h-41zM159 33h40v1h-40zM199 32h41v1h-41zM240 31h36v1h-36zM0 42h1v1h-1zM1 41h40v1h-40zM41 40h41v1h-41zM82 39h40v1h-40zM122 38h41v1h-41zM163 37h40v1h-40zM203 36h41v1h-41zM244 35h32v1h-32zM0 52h37v1h-37zM37 51h41v1h-41zM78 50h40v1h-40zM118 49h41v1h-41zM159 48h40v1h-40zM199 47h41v1h-41zM240 46h36v1h-36zM0 57h1v1h-1zM1 56h40v1h-40zM41 55h41v1h-41zM82 54h40v1h-40zM122 53h41v1h-41zM163 52h40v1h-40zM203 51h41v1h-41zM244 50h32v1h-32zM0 67h37v1h-37zM37 66h41v1h-41zM78 65h40v1h-40zM118 64h41v1h-41zM159 63h40v1h-40zM199 62h41v1h-41zM240 61h36v1h-36zM0 72h1v1h-1zM1 71h40v1h-40zM41 70h41v1h-41zM82 69h40v1h-40zM122 68h41v1h-41zM163 67h40v1h-40zM203 66h41v1h-41zM244 65h32v1h-32zM0 82h37v1h-37zM37 81h41v1h-41zM78 80h40v1h-40zM118 79h41v1h-41zM159 78h40v1h-40zM199 77h41v1h-41zM240 76h36v1h-36zM0 87h1v1h-1zM1 86h40v1h-40zM41 85h41v1h-41zM82 84h40v1h-40zM122 83h41v1h-41zM163 82h40v1h-40zM203 81h41v1h-41zM244 80h32v1h-32zM0 97h37v1h-37zM37 96h41v1h-41zM78 95h40v1h-40zM118 94h41v1h-41zM159 93h40v1h-40zM199 92h41v1h-41zM240 91h36v1h-36zM0 102h1v1h-1zM1 101h40v1h-40zM41 100h41v1h-41zM82 99h40v1h-40zM122 98h41v1h-41zM163 97h40v1h-40zM203 96h41v1h-41zM244 95h32v1h-32zM0 112h37v1h-37zM37 111h41v1h-41zM78 110h40v1h-40zM118 109h41v1h-41zM159 108h40v1h-40zM199 107h41v1h-41zM240 106h36v1h-36zM0 117h1v1h-1zM1 116h40v1h-40zM41 115h41v1h-41zM82 114h40v1h-40zM122 113h41v1h-41zM163 112h40v1h-40zM203 111h41v1h-41zM244 110h32v1h-32zM0 127h37v1h-37zM37 126h41v1h-41zM78 125h40v1h-40zM118 124h41v1h-41zM159 123h40v1h-40zM199 122h41v1h-41zM240 121h36v1h-36zM0 132h1v1h-1zM1 131h40v1h-40zM41 130h41v1h-41zM82 129h40v1h-40zM122 128h41v1h-41zM163 127h40v1h-40zM203 126h41v1h-41zM244 125h32v1h-32zM0 142h37v1h-37zM37 141h41v1h-41zM78 140h40v1h-40zM118 139h41v1h-41zM159 138h40v1h-40zM199 137h41v1h-41zM240 136h36v1h-36zM0 147h1v1h-1zM1 146h40v1h-40zM41 145h41v1h-41zM82 144h40v1h-40zM122 143h41v1h-41zM163 142h40v1h-40zM203 141h41v1h-41zM244 140h32v1h-32z"/>
</g>
<g clip-path="url(#cth)">
<polygon points="0,0 13,0 13,-1 53,-1 53,-2 94,-2 94,-3 134,-3 134,-4 175,-4 175,-5 216,-5 216,-6 256,-6 256,-7 276,-7 276,-2 272,-2 272,-1 232,-1 232,0 191,0 191,1 151,1 151,2 110,2 110,3 70,3 70,4 29,4 29,5 0,5" fill="url(#gg)"/>
<polygon points="0,15 13,15 13,14 53,14 53,13 94,13 94,12 134,12 134,11 175,11 175,10 216,10 216,9 256,9 256,8 276,8 276,13 272,13 272,14 232,14 232,15 191,15 191,16 151,16 151,17 110,17 110,18 70,18 70,19 29,19 29,20 0,20" fill="url(#gg)"/>
<polygon points="0,30 13,30 13,29 53,29 53,28 94,28 94,27 134,27 134,26 175,26 175,25 216,25 216,24 256,24 256,23 276,23 276,28 272,28 272,29 232,29 232,30 191,30 191,31 151,31 151,32 110,32 110,33 70,33 70,34 29,34 29,35 0,35" fill="url(#gg)"/>
<polygon points="0,45 13,45 13,44 53,44 53,43 94,43 94,42 134,42 134,41 175,41 175,40 216,40 216,39 256,39 256,38 276,38 276,43 272,43 272,44 232,44 232,45 191,45 191,46 151,46 151,47 110,47 110,48 70,48 70,49 29,49 29,50 0,50" fill="url(#gg)"/>
<polygon points="0,60 13,60 13,59 53,59 53,58 94,58 94,57 134,57 134,56 175,56 175,55 216,55 216,54 256,54 256,53 276,53 276,58 272,58 272,59 232,59 232,60 191,60 191,61 151,61 151,62 110,62 110,63 70,63 70,64 29,64 29,65 0,65" fill="url(#gg)"/>
<polygon points="0,75 13,75 13,74 53,74 53,73 94,73 94,72 134,72 134,71 175,71 175,70 216,70 216,69 256,69 256,68 276,68 276,73 272,73 272,74 232,74 232,75 191,75 191,76 151,76 151,77 110,77 110,78 70,78 70,79 29,79 29,80 0,80" fill="url(#gg)"/>
<polygon points="0,90 13,90 13,89 53,89 53,88 94,88 94,87 134,87 134,86 175,86 175,85 216,85 216,84 256,84 256,83 276,83 276,88 272,88 272,89 232,89 232,90 191,90 191,91 151,91 151,92 110,92 110,93 70,93 70,94 29,94 29,95 0,95" fill="url(#gg)"/>
<polygon points="0,105 13,105 13,104 53,104 53,103 94,103 94,102 134,102 134,101 175,101 175,100 216,100 216,99 256,99 256,98 276,98 276,103 272,103 272,104 232,104 232,105 191,105 191,106 151,106 151,107 110,107 110,108 70,108 70,109 29,109 29,110 0,110" fill="url(#gg)"/>
<polygon points="0,120 13,120 13,119 53,119 53,118 94,118 94,117 134,117 134,116 175,116 175,115 216,115 216,114 256,114 256,113 276,113 276,118 272,118 272,119 232,119 232,120 191,120 191,121 151,121 151,122 110,122 110,123 70,123 70,124 29,124 29,125 0,125" fill="url(#gg)"/>
<polygon points="0,135 13,135 13,134 53,134 53,133 94,133 94,132 134,132 134,131 175,131 175,130 216,130 216,129 256,129 256,128 276,128 276,133 272,133 272,134 232,134 232,135 191,135 191,136 151,136 151,137 110,137 110,138 70,138 70,139 29,139 29,140 0,140" fill="url(#gg)"/>
<polygon points="0,150 13,150 13,149 53,149 53,148 94,148 94,147 134,147 134,146 175,146 175,145 216,145 216,144 256,144 256,143 276,143 276,148 272,148 272,149 232,149 232,150 191,150 191,151 151,151 151,152 110,152 110,153 70,153 70,154 29,154 29,155 0,155" fill="url(#gg)"/>
<path fill="#141414" d="M0 -1h13v1h-13zM0 5h29v1h-29zM29 4h41v1h-41zM70 3h40v1h-40zM110 2h41v1h-41zM151 1h40v1h-40zM191 0h41v1h-41zM232 -1h40v1h-40zM0 14h13v1h-13zM13 13h40v1h-40zM53 12h41v1h-41zM94 11h40v1h-40zM134 10h41v1h-41zM175 9h41v1h-41zM216 8h40v1h-40zM256 7h20v1h-20zM0 20h29v1h-29zM29 19h41v1h-41zM70 18h40v1h-40zM110 17h41v1h-41zM151 16h40v1h-40zM191 15h41v1h-41zM232 14h40v1h-40zM272 13h4v1h-4zM0 29h13v1h-13zM13 28h40v1h-40zM53 27h41v1h-41zM94 26h40v1h-40zM134 25h41v1h-41zM175 24h41v1h-41zM216 23h40v1h-40zM256 22h20v1h-20zM0 35h29v1h-29zM29 34h41v1h-41zM70 33h40v1h-40zM110 32h41v1h-41zM151 31h40v1h-40zM191 30h41v1h-41zM232 29h40v1h-40zM272 28h4v1h-4zM0 44h13v1h-13zM13 43h40v1h-40zM53 42h41v1h-41zM94 41h40v1h-40zM134 40h41v1h-41zM175 39h41v1h-41zM216 38h40v1h-40zM256 37h20v1h-20zM0 50h29v1h-29zM29 49h41v1h-41zM70 48h40v1h-40zM110 47h41v1h-41zM151 46h40v1h-40zM191 45h41v1h-41zM232 44h40v1h-40zM272 43h4v1h-4zM0 59h13v1h-13zM13 58h40v1h-40zM53 57h41v1h-41zM94 56h40v1h-40zM134 55h41v1h-41zM175 54h41v1h-41zM216 53h40v1h-40zM256 52h20v1h-20zM0 65h29v1h-29zM29 64h41v1h-41zM70 63h40v1h-40zM110 62h41v1h-41zM151 61h40v1h-40zM191 60h41v1h-41zM232 59h40v1h-40zM272 58h4v1h-4zM0 74h13v1h-13zM13 73h40v1h-40zM53 72h41v1h-41zM94 71h40v1h-40zM134 70h41v1h-41zM175 69h41v1h-41zM216 68h40v1h-40zM256 67h20v1h-20zM0 80h29v1h-29zM29 79h41v1h-41zM70 78h40v1h-40zM110 77h41v1h-41zM151 76h40v1h-40zM191 75h41v1h-41zM232 74h40v1h-40zM272 73h4v1h-4zM0 89h13v1h-13zM13 88h40v1h-40zM53 87h41v1h-41zM94 86h40v1h-40zM134 85h41v1h-41zM175 84h41v1h-41zM216 83h40v1h-40zM256 82h20v1h-20zM0 95h29v1h-29zM29 94h41v1h-41zM70 93h40v1h-40zM110 92h41v1h-41zM151 91h40v1h-40zM191 90h41v1h-41zM232 89h40v1h-40zM272 88h4v1h-4zM0 104h13v1h-13zM13 103h40v1h-40zM53 102h41v1h-41zM94 101h40v1h-40zM134 100h41v1h-41zM175 99h41v1h-41zM216 98h40v1h-40zM256 97h20v1h-20zM0 110h29v1h-29zM29 109h41v1h-41zM70 108h40v1h-40zM110 107h41v1h-41zM151 106h40v1h-40zM191 105h41v1h-41zM232 104h40v1h-40zM272 103h4v1h-4zM0 119h13v1h-13zM13 118h40v1h-40zM53 117h41v1h-41zM94 116h40v1h-40zM134 115h41v1h-41zM175 114h41v1h-41zM216 113h40v1h-40zM256 112h20v1h-20zM0 125h29v1h-29zM29 124h41v1h-41zM70 123h40v1h-40zM110 122h41v1h-41zM151 121h40v1h-40zM191 120h41v1h-41zM232 119h40v1h-40zM272 118h4v1h-4zM0 134h13v1h-13zM13 133h40v1h-40zM53 132h41v1h-41zM94 131h40v1h-40zM134 130h41v1h-41zM175 129h41v1h-41zM216 128h40v1h-40zM256 127h20v1h-20zM0 140h29v1h-29zM29 139h41v1h-41zM70 138h40v1h-40zM110 137h41v1h-41zM151 136h40v1h-40zM191 135h41v1h-41zM232 134h40v1h-40zM272 133h4v1h-4zM53 147h41v1h-41zM94 146h40v1h-40zM134 145h41v1h-41zM175 144h41v1h-41zM216 143h40v1h-40zM256 142h20v1h-20z"/>
</g>
<path shape-rendering="auto" fill="#f4f6f8" d="M0 8.1 L2.6 9.3 L3 11.2 L2.6 13.1 L0 14.3ZM0 23.1 L2.6 24.3 L3 26.2 L2.6 28.1 L0 29.3ZM0 38.1 L2.6 39.3 L3 41.2 L2.6 43.1 L0 44.3ZM0 53.1 L2.6 54.3 L3 56.2 L2.6 58.1 L0 59.3ZM0 68.1 L2.6 69.3 L3 71.2 L2.6 73.1 L0 74.3ZM0 83.1 L2.6 84.3 L3 86.2 L2.6 88.1 L0 89.3ZM0 98.1 L2.6 99.3 L3 101.2 L2.6 103.1 L0 104.3ZM0 113.1 L2.6 114.3 L3 116.2 L2.6 118.1 L0 119.3ZM0 128.1 L2.6 129.3 L3 131.2 L2.6 133.1 L0 134.3ZM0 143.1 L2.6 144.3 L3 146.2 L2.6 148.1 L0 149.3Z"/>
<rect x="0" y="0" width="276" height="1" fill="#101010"/>
<rect x="0" y="148" width="276" height="28" fill="url(#gbase)"/>
<rect x="0" y="175" width="276" height="2" fill="#1a1a1a"/>
</svg>
<svg class="a" style="left:334px;top:175px" width="1112" height="698">
<line x1="6" y1="538" x2="1112" y2="538" stroke="#a628d6" stroke-width="2" stroke-dasharray="5 1 1 1" stroke-dashoffset="2"/>
<line x1="530" y1="0" x2="530" y2="698" stroke="#a628d6" stroke-width="2" stroke-dasharray="5 1 1 1" stroke-dashoffset="2"/>
</svg>
<!-- graphics toolbar -->
<div class="a" style="left:852px;top:182px;width:550px;height:38px;background:#f6f7f9;border:1px solid #a4a6aa"></div>

<!-- radios -->
<svg class="a" style="left:352px;top:493px" width="17" height="41" viewBox="0 0 17 41">
<circle cx="8.5" cy="8.5" r="6.6" fill="#fff" stroke="#6a6a6a" stroke-width="1.3"/><circle cx="8.5" cy="8.5" r="3.4" fill="#333"/>
<circle cx="8.5" cy="32.5" r="6.6" fill="#fff" stroke="#6a6a6a" stroke-width="1.3"/>
</svg>
<!-- panel grip -->
<svg class="a" style="left:474px;top:183px" width="24" height="4" viewBox="0 0 24 4"><g fill="#a0a0a0"><rect x="1" y="1" width="2" height="2"/><rect x="7" y="1" width="2" height="2"/><rect x="13" y="1" width="2" height="2"/><rect x="19" y="1" width="2" height="2"/></g></svg>

<!-- graphics toolbar icons -->
<svg class="a" style="left:860px;top:190px" width="22" height="22" viewBox="0 0 22 22">
<rect x="1.5" y="1.5" width="17" height="17" fill="#fff" stroke="#b0b0b0" stroke-width="1.4"/>
<path d="M13.5 13.5 L20 20" stroke="#888" stroke-width="2.6" stroke-linecap="round"/>
<circle cx="9.5" cy="9.5" r="5.5" fill="#e4f6fc" stroke="#2e8ab8" stroke-width="1.6"/>
</svg>
<svg class="a" style="left:892px;top:190px" width="22" height="22" viewBox="0 0 22 22">
<path d="M13 13 L20 20" stroke="#888" stroke-width="2.6" stroke-linecap="round"/>
<circle cx="9" cy="9" r="6.8" fill="#e8f8fd" stroke="#2e8ab8" stroke-width="1.8"/>
<path d="M9 5.5 V12.5 M5.5 9 H12.5" stroke="#1e6a98" stroke-width="2.2"/>
</svg>
<svg class="a" style="left:924px;top:190px" width="22" height="22" viewBox="0 0 22 22">
<path d="M13 13 L20 20" stroke="#888" stroke-width="2.6" stroke-linecap="round"/>
<circle cx="9" cy="9" r="6.8" fill="#e8f8fd" stroke="#2e8ab8" stroke-width="1.8"/>
<path d="M5.5 9 H12.5" stroke="#1e6a98" stroke-width="2.2"/>
</svg>
<svg class="a" style="left:956px;top:190px" width="22" height="22" viewBox="0 0 22 22">
<defs><linearGradient id="rpg" x1="0" y1="0" x2="1" y2="1"><stop offset="0.45" stop-color="#fff"/><stop offset="0.55" stop-color="#9ccce4"/><stop offset="1" stop-color="#5aa4cc"/></linearGradient></defs>
<rect x="1.5" y="1.5" width="19" height="19" fill="url(#rpg)" stroke="#a8a8a8" stroke-width="1.4"/>
<path d="M3 19 L19 4" stroke="#1e6a98" stroke-width="1.4"/>
</svg>
<svg class="a" style="left:985px;top:186px" width="95" height="30" viewBox="985 186 95 30">
<defs><radialGradient id="sph" cx="0.38" cy="0.32" r="0.75"><stop offset="0" stop-color="#fff"/><stop offset="0.55" stop-color="#e6e6e6"/><stop offset="1" stop-color="#7c7c7c"/></radialGradient>
<linearGradient id="cyl" x1="0" y1="0" x2="1" y2="1"><stop offset="0" stop-color="#fff"/><stop offset="0.5" stop-color="#e8e8e8"/><stop offset="1" stop-color="#8a8a8a"/></linearGradient></defs>
<path d="M997 195 Q999 191 1004 191 L1009 191 L1009 203 Q1005 205.5 999 203Z" fill="url(#cyl)"/>
<circle cx="995.5" cy="204.5" r="6" fill="url(#sph)"/>
<path d="M1008.5 212.5 L1011.5 212.5 L1011.5 209.5Z" fill="#555"/>
<path d="M1021 196 L1026 191.2 L1041 191.2 L1041 206 L1036 210.8 L1021 210.8Z" fill="#7cc4e2" stroke="#1a6a94" stroke-width="1.3" stroke-linejoin="round"/>
<path d="M1021 196 L1026 191.2 L1041 191.2 L1036 196Z" fill="#d4f4fc" stroke="#1a6a94" stroke-width="1.3" stroke-linejoin="round"/>
<rect x="1021" y="196" width="15" height="14.8" fill="#fff" stroke="#1a6a94" stroke-width="1.4"/>
<path d="M1040.5 212.5 L1043.5 212.5 L1043.5 209.5Z" fill="#555"/>
<path d="M1053 200.5 L1058 191.2 L1069 191.2 L1074 200.5 L1069 209.8 L1058 209.8Z" fill="#d4f2fc" stroke="#5ab4dc" stroke-width="1.1"/>
<path d="M1053 200.5 L1068.5 200.5 L1069 191.2 L1074 200.5Z" fill="#e8f8ff" stroke="#5ab4dc" stroke-width="1.1"/>
<path d="M1069 191.2 L1074 200.5 L1068.5 200.5Z" fill="#6ab6d8" stroke="#3a98c4" stroke-width="1.1"/>
<rect x="1066" y="203" width="7" height="8" fill="#fafafa" stroke="#8a8a8a" stroke-width="1"/><path d="M1068 205.5 H1071 M1068 208.2 H1071" stroke="#888" stroke-width="0.9"/>
<path d="M1072.5 212.5 L1075.5 212.5 L1075.5 209.5Z" fill="#555"/>
</svg>
<svg class="a" style="left:1084px;top:190px" width="24" height="22" viewBox="0 0 24 22">
<rect x="1.5" y="1.5" width="16" height="17" fill="#fff" stroke="#999" stroke-width="1.1"/>
<path d="M1.5 5 H17.5 M1.5 9 H17.5 M1.5 13 H17.5 M6 1.5 V18.5" stroke="#999" stroke-width="0.9"/>
<rect x="9" y="11" width="13" height="9.5" rx="1" fill="#333"/><rect x="13" y="9" width="5" height="3" fill="#333"/>
<circle cx="15.5" cy="15.8" r="2.8" fill="#777" stroke="#ddd" stroke-width="0.8"/>
</svg>
<svg class="a" style="left:1116px;top:191px" width="24" height="21" viewBox="0 0 24 21">
<path d="M1.5 6 L5.5 2 L18 2 L18 14.5 L14 18.5 L1.5 18.5Z" fill="#c6ecfb" stroke="#5ab0dc" stroke-width="1.1"/>
<rect x="1.5" y="6" width="12.5" height="12.5" fill="#fff" stroke="#5ab0dc" stroke-width="1.1"/>
<path d="M22.5 10.5 H15.5 M18.5 7.5 L15.5 10.5 L18.5 13.5" fill="none" stroke="#333" stroke-width="1.8"/>
</svg>
<svg class="a" style="left:1148px;top:191px" width="22" height="21" viewBox="0 0 22 21">
<path d="M1.5 5 L7 1.5 L20.5 1.5 L20.5 13 L15 19.5 L3.5 19.5 L1.5 5Z" fill="#8ecbe8" stroke="#3a8cbc" stroke-width="1.1"/>
<path d="M1.5 5 L15 5 L20.5 1.5 M15 5 L15 19.5" fill="none" stroke="#3a8cbc" stroke-width="1.1"/>
<path d="M4 8 L13 8 L13 17 L5 17Z" fill="#d8f2fc"/>
</svg>
<svg class="a" style="left:1180px;top:190px" width="26" height="24" viewBox="0 0 26 24">
<path d="M1.5 7 L6.5 2 L20 2 L20 15 L15 20.5 L1.5 20.5Z" fill="#e4f6fc" stroke="#5ab0dc" stroke-width="1.1"/>
<path d="M2 21 L21 2" stroke="#1e6a98" stroke-width="1.8"/>
<path d="M15 20.5 L20 15 L20 2" fill="none" stroke="#aaa" stroke-dasharray="1 1"/>
<path d="M22 22 L25 22 L25 19Z" fill="#555"/>
</svg>
<svg class="a" style="left:1211px;top:190px" width="26" height="24" viewBox="0 0 26 24">
<g stroke="#8a6a30" stroke-width="1.8" fill="none">
<path d="M2 2 L7 7 M7 2 L2 7"/><path d="M13 2 L10.5 7 M9.5 10 L8 13 M7 16 L5 20"/>
<path d="M13 9 V16 H20 M13 16 L9 20"/>
</g>
<path d="M13 8 L11 11 H15Z M21 16 L18 14 V18Z" fill="#8a6a30"/>
<path d="M22 22 L25 22 L25 19Z" fill="#555"/>
</svg>
<svg class="a" style="left:1244px;top:190px" width="22" height="23" viewBox="0 0 22 23">
<rect x="1" y="1.5" width="13" height="8" fill="#fbf3d8" stroke="#999" stroke-width="1"/>
<path d="M14 6 H20 V11 M17.5 8.5 L20 11.5 L22 8.5" fill="none" stroke="#333" stroke-width="1.4"/>
<path d="M7 17.5 Q13.5 11.5 20 17.5 Q13.5 23 7 17.5Z" fill="#333"/><circle cx="13.5" cy="17.3" r="2" fill="#fff"/><circle cx="13.5" cy="17.3" r="1" fill="#333"/>
</svg>
<div class="a" style="left:1273px;top:187px;width:29px;height:29px;background:#dfe0e2;border:1px solid #b0b0b0"></div>
<svg class="a" style="left:1276px;top:190px" width="24" height="23" viewBox="0 0 24 23">
<path d="M5.5 5.5 L11.5 11.5 L18 11.5 M11.5 11.5 L5.5 17.5" stroke="#333" stroke-width="1.6" fill="none"/>
<circle cx="5.5" cy="5" r="3.3" fill="#6cc04a" stroke="#4a9030" stroke-width="0.8"/>
<circle cx="18" cy="11.5" r="3.3" fill="#f27a7a" stroke="#c04a4a" stroke-width="0.8"/>
<circle cx="5.5" cy="17.5" r="3.3" fill="#3a8cc8" stroke="#2a6a98" stroke-width="0.8"/>
</svg>
<svg class="a" style="left:1308px;top:190px" width="23" height="23" viewBox="0 0 23 23">
<path d="M10 2 L19.5 19 L1.5 19Z M10 7 L15 17 L5 17Z" fill="#c8c8c8" fill-rule="evenodd" stroke="#a8a8a8" stroke-width="1"/>
<circle cx="17.5" cy="17.5" r="4.5" fill="#e8e8e8" stroke="#b0b0b0"/><path d="M16 15 L20 17.5 L16 20Z" fill="#fff"/>
</svg>
<div class="a" style="left:1343px;top:194px;width:5px;height:15px;background:#b8b8b8"></div>
<div class="a" style="left:1352px;top:194px;width:5px;height:15px;background:#b8b8b8"></div>
<svg class="a" style="left:1372px;top:191px" width="23" height="20" viewBox="0 0 23 20">
<defs><linearGradient id="gsh" x1="0" x2="1"><stop offset="0" stop-color="#e0e0e0"/><stop offset="1" stop-color="#c8c8c8"/></linearGradient></defs>
<path d="M1.5 4 H21.5 V16 H1.5 Q7 14 7 10 Q7 6 1.5 4Z" fill="url(#gsh)" stroke="#c4c4c4"/>
</svg>

<!-- viewport model decorations -->
<svg class="a" style="left:820px;top:590px" width="220" height="140" viewBox="820 590 220 140">
<path d="M980 610.5 H1003" fill="none" stroke="#3ce040" stroke-width="1.2"/>
<path d="M1003 610.5 V633.5" stroke="#30ecf0" stroke-width="1.2"/>
<circle cx="980" cy="610.5" r="2.2" fill="#3ce040"/>
<circle cx="1003" cy="610.5" r="3" fill="#f03a3a"/>
<circle cx="1003" cy="633.5" r="2.2" fill="#30ecf0"/>
<g fill="#b048d8" stroke="#b048d8">
<path d="M864 712 V668" stroke-width="2.4"/>
<path d="M858.5 669 L864 656.5 L869.5 669Z" stroke="none"/>
<path d="M863.5 711 L841 673" stroke-width="2.4"/>
<path d="M836 666.5 L849.5 675 L838.5 681.5Z" stroke="none"/>
</g>
<g fill="none" stroke="#3c0c70" stroke-width="1.2">
<path d="M879.5 701 V687.5 H883 Q886 687.5 886 690.5 Q886 693.5 883 693.5 H879.5"/>
<path d="M891.5 692 V701 M889.5 701 H893.5"/><circle cx="891.5" cy="688.5" r="0.6" fill="#3c0c70"/>
<path d="M901 688 V699 Q901 701 903.5 701 H905 M897.5 692 H905"/>
<path d="M915.5 693 Q913.5 691.5 911.5 692.5 Q909.5 694 909.5 696.5 Q909.5 699.5 911.5 700.5 Q913.5 701.5 915.5 700"/>
<path d="M919 687 V701 M919 694 Q920.5 692 922.5 692 Q925 692 925 695 V701"/>
<path d="M929.5 691 H935"/>
<path d="M950.5 689.5 L953.5 687.5 V701 M950.5 701 H956.5"/>
<circle cx="963" cy="700.3" r="0.7" fill="#3c0c70"/>
<path d="M970.5 689 Q972 687.5 974 687.5 Q977 687.5 977 690.5 Q977 693.5 973.5 693.5 Q977.5 693.5 977.5 697 Q977.5 701 974 701 Q971.5 701 970.5 699.5"/>
<path d="M984.5 687.5 Q981.5 687.5 981.5 694.3 Q981.5 701 984.5 701 Q987.5 701 987.5 694.3 Q987.5 687.5 984.5 687.5Z"/>
</g>
<text x="868" y="715" font-family="Liberation Sans, sans-serif" font-size="11" fill="#f8a810" textLength="36" lengthAdjust="spacingAndGlyphs">起始点</text>
<circle cx="864" cy="718" r="2.3" fill="#30c0f0"/>
</svg>

<div class="t" style="left:1258px;top:850px;font-family:'Liberation Mono',monospace;font-size:19.4px;color:#c6c6c6">doit@DOIT SUPER</div>
</body></html>
